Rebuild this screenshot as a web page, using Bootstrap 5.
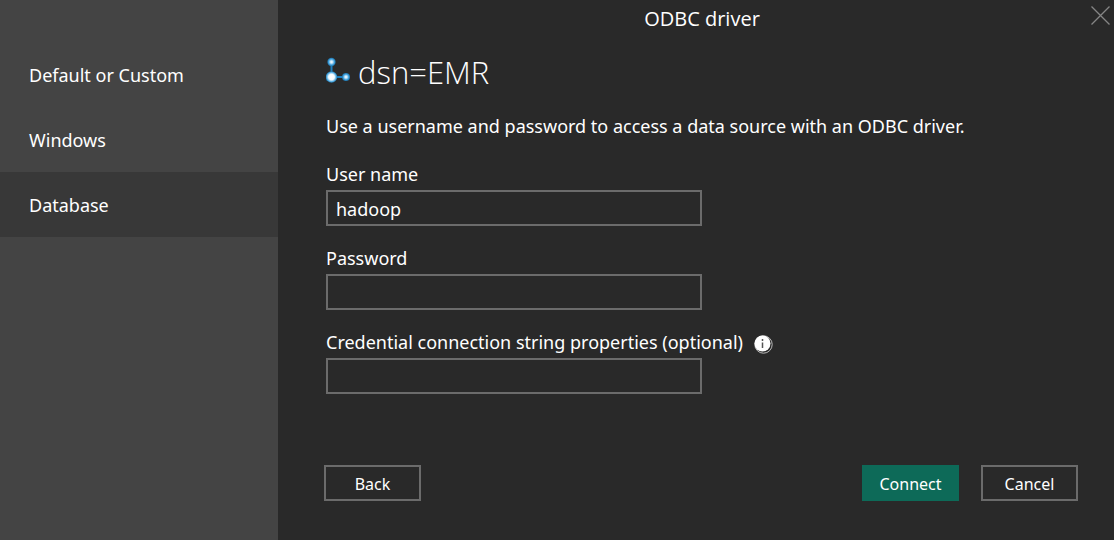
<!DOCTYPE html>
<html lang="en" data-bs-theme="dark">
<head>
<meta charset="utf-8">
<meta name="viewport" content="width=device-width, initial-scale=1">
<title>ODBC driver</title>
<link href="https://cdn.jsdelivr.net/npm/bootstrap@5.3.0/dist/css/bootstrap.min.css" rel="stylesheet">
<style>
  body { font-family: "Noto Sans", "Open Sans", sans-serif; font-size: 18px; line-height: 24px; color: #fff; background: #292929; }
  .auth-kinds { flex: 0 0 278px; background: #444; padding-top: 42px; }
  .auth-kinds .nav-link { color: #fff; padding: 21px 29px 20px; border-radius: 0; }
  .auth-kinds .nav-link.active { background: #383838; }
  .title-bar { padding: 7px 0 0 12px; }
  .title-bar h1 { font-family: "Open Sans", sans-serif; font-size: 20px; line-height: 24px; }
  .close-btn { top: 6px; right: 4px; line-height: 0; color: #858585; }
  .auth-form { padding: 21px 36px 39px 48px; }
  .source-name { font-family: "Open Sans", sans-serif; font-size: 31px; line-height: 40px; font-weight: 300; }
  .intro { margin: 22px 0 24px; }
  .field { max-width: 376px; margin-bottom: 20px; }
  .field label { margin-bottom: 4px; }
  .with-info { gap: 10px; }
  .field .form-control { height: 36px; padding: 4px 8px 2px; font-size: 18px; line-height: 24px; color: #fff; background: #292929; border: 2px solid #6b6b6b; border-radius: 0; }
  .actions { gap: 22px; margin-left: -2px; }
  .dialog-btn { width: 97px; height: 36px; padding: 2px 0 0; font-size: 16px; line-height: 24px; color: #fff; border: 2px solid #6b6b6b; border-radius: 0; }
  .dialog-btn.go { background: #0d6a58; border-color: #0d6a58; }
</style>
</head>
<body>
<div class="d-flex min-vh-100">
  <nav class="auth-kinds nav nav-pills flex-column flex-nowrap" aria-label="Authentication kind">
    <a class="nav-link" href="#default">Default or Custom</a>
    <a class="nav-link" href="#windows">Windows</a>
    <a class="nav-link active" href="#database" aria-current="page">Database</a>
  </nav>
  <main class="flex-grow-1 d-flex flex-column">
    <header class="title-bar position-relative text-center">
      <h1 class="m-0 fw-normal">ODBC driver</h1>
      <button type="button" class="close-btn btn p-0 border-0 position-absolute" aria-label="Close">
        <svg width="19" height="19" viewBox="0 0 19 19" stroke="currentColor" stroke-width="1.3"><path d="M.5.5l18 18M18.500.5l-18 18"/></svg>
      </button>
    </header>
    <form class="auth-form flex-grow-1 d-flex flex-column">
      <div class="d-flex align-items-center gap-2">
        <svg width="24" height="30" viewBox="0 0 24 30" aria-hidden="true">
          <defs>
            <radialGradient id="node"><stop offset="0" stop-color="#fff"/><stop offset=".3" stop-color="#c4e4f8"/><stop offset=".7" stop-color="#3d9fdb"/><stop offset="1" stop-color="#1c6fa5"/></radialGradient>
            <radialGradient id="hub"><stop offset="0" stop-color="#fff"/><stop offset=".5" stop-color="#f4fbff"/><stop offset=".8" stop-color="#55aee3"/><stop offset="1" stop-color="#1c6fa5"/></radialGradient>
          </defs>
          <path d="M5.500 5v15h15" fill="none" stroke="#1c7fbe" stroke-width="2"/>
          <circle cx="5.500" cy="5" r="4.200" fill="url(#node)"/>
          <circle cx="20" cy="20" r="4" fill="url(#node)"/>
          <circle cx="5.500" cy="20" r="5.800" fill="url(#hub)"/>
        </svg>
        <h2 class="source-name m-0">dsn=EMR</h2>
      </div>
      <p class="intro">Use a username and password to access a data source with an ODBC driver.</p>
      <div class="field">
        <label class="d-block" for="user">User name</label>
        <input class="form-control" id="user" type="text" value="hadoop">
      </div>
      <div class="field">
        <label class="d-block" for="password">Password</label>
        <input class="form-control" id="password" type="password">
      </div>
      <div class="field">
        <label class="with-info d-flex align-items-center text-nowrap" for="props">Credential connection string properties (optional)
          <svg class="flex-shrink-0 mt-1" width="20" height="20" viewBox="0 0 20 20" role="img" aria-label="Information">
            <circle cx="10.500" cy="10.500" r="8.700" fill="#292929" stroke="#bbb"/>
            <circle cx="9.500" cy="9.500" r="8" fill="#fff"/>
            <path d="M9.500 8.500v5.500M9.500 5v2" stroke="#555" stroke-width="1.500"/>
          </svg>
        </label>
        <input class="form-control" id="props" type="text">
      </div>
      <div class="actions d-flex mt-auto">
        <button type="button" class="dialog-btn btn">Back</button>
        <button type="submit" class="dialog-btn go btn ms-auto">Connect</button>
        <button type="button" class="dialog-btn btn">Cancel</button>
      </div>
    </form>
  </main>
</div>
<script src="https://cdn.jsdelivr.net/npm/bootstrap@5.3.0/dist/js/bootstrap.bundle.min.js"></script>
</body>
</html>
